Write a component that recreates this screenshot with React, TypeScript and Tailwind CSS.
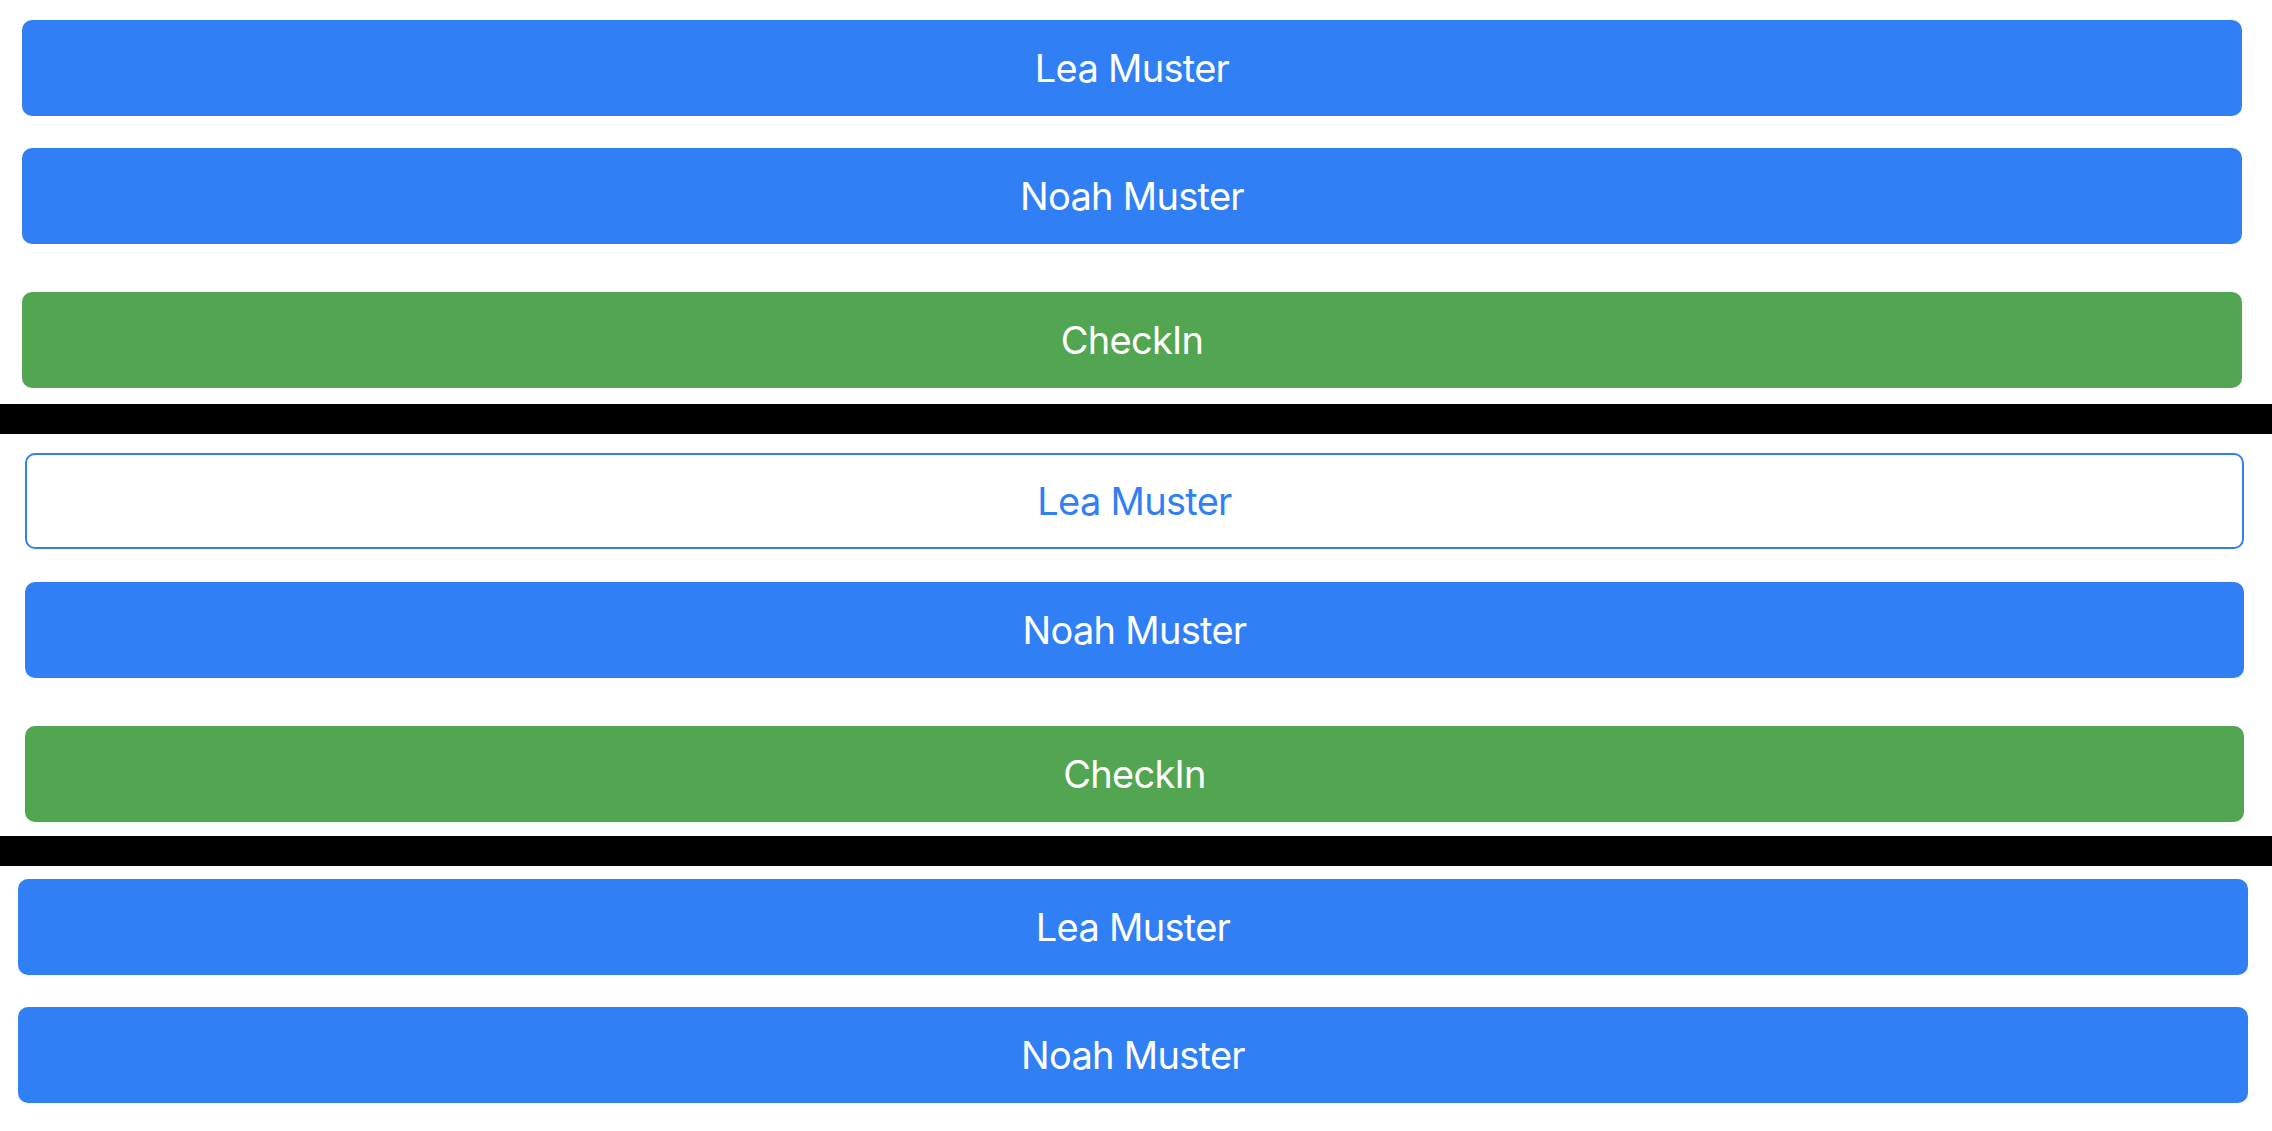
import React from 'react';

const font = { fontFamily: 'Inter, "Noto Sans", sans-serif' };

function Btn({ label, kind }: { label: string; kind: 'primary' | 'outline' | 'success' }) {
  const cls =
    kind === 'primary'
      ? 'bg-[#317ff5] text-white'
      : kind === 'success'
        ? 'bg-[#52a551] text-white'
        : 'bg-white text-[#317ff5] border-2 border-[#317ff5]';
  return (
    <button
      className={`flex h-24 w-full items-center justify-center rounded-[10px] text-[38px] tracking-[-0.7px] ${cls}`}
    >
      {label}
    </button>
  );
}

export default function App() {
  return (
    <div className="min-h-[1131px] w-full bg-white" style={font}>
      {/* variant 1 */}
      <section className="flex flex-col pb-[16px] pl-[22px] pr-[30px] pt-[20px]">
        <Btn label="Lea Muster" kind="primary" />
        <div className="mt-8">
          <Btn label="Noah Muster" kind="primary" />
        </div>
        <div className="mt-12">
          <Btn label="CheckIn" kind="success" />
        </div>
      </section>
      <div className="h-[30px] bg-black" />

      {/* variant 2 */}
      <section className="flex flex-col pb-[14px] pl-[25px] pr-[28px] pt-[19px]">
        <Btn label="Lea Muster" kind="outline" />
        <div className="mt-[33px]">
          <Btn label="Noah Muster" kind="primary" />
        </div>
        <div className="mt-12">
          <Btn label="CheckIn" kind="success" />
        </div>
      </section>
      <div className="h-[30px] bg-black" />

      {/* variant 3 */}
      <section className="flex flex-col pl-[18px] pr-[24px] pt-[13px]">
        <Btn label="Lea Muster" kind="primary" />
        <div className="mt-8">
          <Btn label="Noah Muster" kind="primary" />
        </div>
      </section>
    </div>
  );
}
